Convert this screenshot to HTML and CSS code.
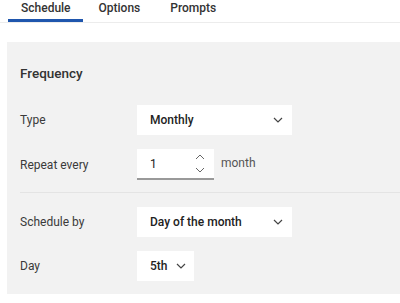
FILE: index.html
```html
<!DOCTYPE html>
<html lang="en">
<head>
    <meta charset="UTF-8">
    <title>Schedule</title>
    <link rel="stylesheet" href="styles.css">
</head>
<body>
    <div class="tabs">
        <a href="#" class="tab on">Schedule</a>
        <a href="#" class="tab">Options</a>
        <a href="#" class="tab">Prompts</a>
    </div>
    <div class="panel">
        <h3 class="title">Frequency</h3>
        <div class="row first">
            <span class="label">Type</span>
            <div class="select wide">
                <span>Monthly</span>
                <svg class="chev" width="10" height="6" viewBox="0 0 10 6"><path d="M1 1l4 4 4-4" fill="none" stroke="#444" stroke-width="1.2"/></svg>
            </div>
        </div>
        <div class="row">
            <span class="label">Repeat every</span>
            <div class="number">
                <span>1</span>
                <div class="spin">
                    <svg width="10" height="6" viewBox="0 0 10 6"><path d="M1 5l4-4 4 4" fill="none" stroke="#666" stroke-width="1"/></svg>
                    <svg width="10" height="6" viewBox="0 0 10 6"><path d="M1 1l4 4 4-4" fill="none" stroke="#666" stroke-width="1"/></svg>
                </div>
            </div>
            <span class="unit">month</span>
        </div>
        <div class="divider"></div>
        <div class="row">
            <span class="label">Schedule by</span>
            <div class="select wide">
                <span>Day of the month</span>
                <svg class="chev" width="10" height="6" viewBox="0 0 10 6"><path d="M1 1l4 4 4-4" fill="none" stroke="#444" stroke-width="1.2"/></svg>
            </div>
        </div>
        <div class="row">
            <span class="label">Day</span>
            <div class="select small">
                <span>5th</span>
                <svg class="chev" width="10" height="6" viewBox="0 0 10 6"><path d="M1 1l4 4 4-4" fill="none" stroke="#444" stroke-width="1.2"/></svg>
            </div>
        </div>
    </div>
</body>
</html>
```

FILE: styles.css
```css
*{
    margin: 0;
    padding: 0;
    box-sizing: border-box;
}
body{
    font-family: Roboto, "Liberation Sans", sans-serif;
    font-size: 12px;
    color: #333;
    background: #fff;
    overflow: hidden;
}
.tabs{
    display: flex;
    padding-left: 8px;
    border-bottom: 1px solid #ececec;
    height: 23px;
}
.tab{
    display: block;
    padding: 0 12px 0 13px;
    height: 22px;
    line-height: 16px;
    font-weight: 500;
    font-size: 12px;
    color: #333;
    text-decoration: none;
    border-bottom: 3px solid transparent;
}
.tab + .tab{
    padding: 0 14px 0 16px;
}
.tab.on{
    border-bottom-color: #1f56ad;
}
.panel{
    margin: 19px 0 0 7px;
    width: 400px;
    height: 252px;
    background: #f2f2f2;
    padding: 24px 0 0 13px;
}
.title{
    font-size: 13.5px;
    font-weight: 500;
    color: #333;
    height: 14px;
    line-height: 14px;
}
.row{
    display: flex;
    align-items: center;
    margin-top: 14px;
}
.row.first{
    margin-top: 25px;
}
.label{
    width: 117px;
    color: #3a3a3a;
}
.select{
    display: flex;
    align-items: center;
    justify-content: space-between;
    height: 30px;
    background: #fff;
    padding: 0 9px 0 13px;
    font-weight: 500;
    color: #222;
}
.wide{
    width: 155px;
}
.small{
    width: 57px;
    padding-right: 8px;
}
.chev{
    display: block;
}
.number{
    display: flex;
    align-items: center;
    justify-content: space-between;
    width: 77px;
    height: 31px;
    background: #fff;
    border-bottom: 2px solid #999;
    padding: 0 9px 0 13px;
    color: #222;
}
.spin{
    display: flex;
    flex-direction: column;
    gap: 7px;
}
.spin svg{
    display: block;
}
.unit{
    margin-left: 7px;
    color: #555;
    margin-bottom: 4px;
}
.divider{
    height: 1px;
    background: #e4e4e4;
    margin-top: 12px;
}
.divider + .row{
    margin-top: 14px;
}
```
